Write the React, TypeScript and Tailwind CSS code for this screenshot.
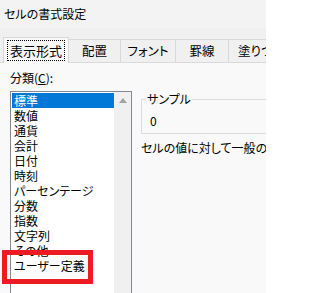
import React from "react";

const items = [
  "標準",
  "数値",
  "通貨",
  "会計",
  "日付",
  "時刻",
  "パーセンテージ",
  "分数",
  "指数",
  "文字列",
  "その他",
  "ユーザー定義",
];

const tabs = [
  { label: "配置", w: "w-[52px]" },
  { label: "フォント", w: "w-[55px]" },
  { label: "罫線", w: "w-[53px]" },
];

export default function App() {
  return (
    <div className="relative w-[266px] h-[293px] overflow-hidden bg-[#f0f0f0] text-black font-['Noto_Sans_CJK_JP',sans-serif] [font-feature-settings:'palt']">
      {/* title bar */}
      <div className="h-[28px] bg-[#f3f3f3] pl-[4px] flex items-center pb-[1px] text-[12px]">
        セルの書式設定
      </div>

      {/* tabs */}
      <div className="mt-[9px] h-[25px] flex items-end pl-[3px] whitespace-nowrap">
        <div className="relative z-10 mb-[-1px] w-[66px] shrink-0 h-[26px] bg-[#f9f9f9] border-l border-t border-r border-[#d9d9d9] flex justify-center pt-[2px]">
          <span className="w-[58px] h-[21px] border border-dotted border-black flex items-center justify-center text-[13px] leading-none">
            表示形式
          </span>
        </div>
        {tabs.map((t) => (
          <div
            key={t.label}
            className={`${t.w} shrink-0 h-[23px] border-t border-r border-[#d9d9d9] flex items-center justify-center text-[12.5px]`}
          >
            {t.label}
          </div>
        ))}
        <div className="w-[70px] shrink-0 h-[23px] border-t border-[#d9d9d9] flex items-center pl-[9px] text-[12.5px]">
          塗りつぶし
        </div>
      </div>

      {/* panel */}
      <div className="h-[300px] bg-[#f9f9f9] border-t border-[#d9d9d9] flex pl-[10px] pt-[7px] gap-[9px]">
        <div className="w-[122px] shrink-0">
          <div className="text-[12px] leading-[16px] mb-[5px]">
            分類(<span className="underline">C</span>):
          </div>
          <div className="h-[220px] bg-white border border-[#828790] flex">
            <div className="w-[103px] pl-[1px] pt-[1px]">
              {items.map((it, i) => (
                <div
                  key={it}
                  className={`h-[15px] w-[102px] pl-[2px] text-[12px] leading-[15px] whitespace-nowrap ${
                    i === 0 ? "bg-[#0078d7] text-white" : ""
                  }`}
                >
                  {it}
                </div>
              ))}
            </div>
            <div className="w-[17px] bg-[#f0f0f0]">
              <div className="h-[17px] flex items-center justify-center pl-[1px]">
                <svg width="8" height="5" viewBox="0 0 8 5">
                  <path d="M4 0 L8 5 L0 5 Z" fill="#a3a3a3" />
                </svg>
              </div>
            </div>
          </div>
        </div>

        <div className="w-[220px] shrink-0 mt-[29px] whitespace-nowrap">
          <div className="relative h-[35px] border border-[#dcdcdc]">
            <span className="absolute top-[-8px] left-[4px] px-[1px] bg-[#f9f9f9] text-[12px] leading-[14px]">
              サンプル
            </span>
            <div className="pt-[14px] pl-[8px] text-[12px] leading-[14px]">0</div>
          </div>
          <div className="mt-[7px] text-[12px] leading-[14px]">
            セルの値に対して一般の書式を設定します。
          </div>
        </div>
      </div>

      {/* annotation */}
      <div className="absolute left-[2px] top-[250px] w-[91px] h-[34px] border-[5px] border-[#ed1c24]" />
    </div>
  );
}
